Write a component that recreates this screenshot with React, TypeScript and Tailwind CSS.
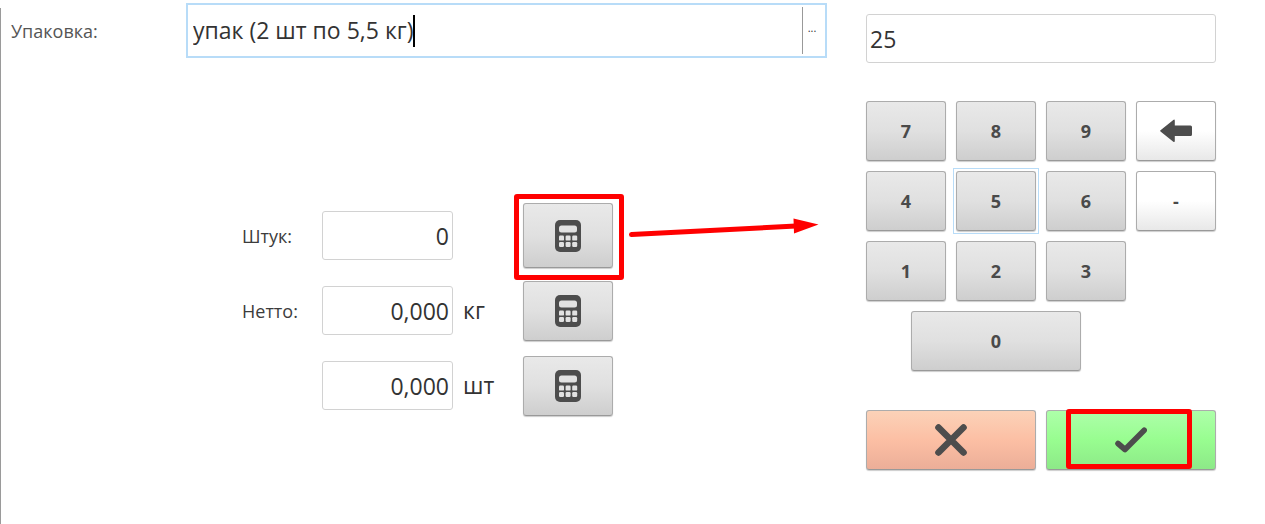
import { useState } from "react";
import type { ReactNode } from "react";

const keyBase =
  "flex items-center justify-center rounded-[3px] border border-[#acacac] border-b-[#999999] bg-linear-to-b text-lg font-bold text-[#4a4a4a] shadow-[0_1px_1px_rgba(0,0,0,0.2)]";
const grey = "from-[#e9e9e9] via-[#e0e0e0] to-[#cecece]";
const white = "from-white via-white to-[#e8e8e8]";

function CalculatorIcon() {
  return (
    <svg width="26" height="32" viewBox="0 0 26 32" aria-hidden="true">
      <rect width="26" height="32" rx="5" fill="#4d4d4d" />
      <g fill="#e2e2e2">
        <rect x="4" y="5.5" width="18" height="7" rx="2.5" />
        {[4, 10.6, 17.2].map((x) => (
          <g key={x}>
            <rect x={x} y="15.6" width="5" height="5" rx="1.2" />
            <rect x={x} y="22" width="5" height="5" rx="1.2" />
          </g>
        ))}
      </g>
    </svg>
  );
}

function ArrowPointer() {
  return (
    <svg
      className="pointer-events-none absolute top-[13px] left-[105px] max-w-none"
      width="192"
      height="24"
      viewBox="0 0 192 24"
      aria-hidden="true"
    >
      <path d="M3.500 18.500 L168 10" stroke="#ff0000" strokeWidth="5" strokeLinecap="round" />
      <path d="M165.500 2.500 L190.500 8.500 L166 17.500 Z" fill="#ff0000" />
    </svg>
  );
}

function QuantityRow({
  id,
  label,
  initial,
  unit,
  children,
}: {
  id: string;
  label: string;
  initial: string;
  unit: string;
  children: ReactNode;
}) {
  const [value, setValue] = useState(initial);
  return (
    <div className="flex h-[75px] items-center">
      <label htmlFor={id} className="w-20 shrink-0 text-lg text-[#3c3c3c]">
        {label}
      </label>
      <input
        id={id}
        aria-label={label || unit}
        value={value}
        onChange={(e) => setValue(e.target.value)}
        className="h-[49px] w-[131px] shrink-0 rounded-[3px] border border-[#d2d2d2] px-[3px] text-right text-[23px] text-[#333333] outline-none"
      />
      <span className="w-[70px] shrink-0 pl-[10px] text-[23px] text-[#333333]">{unit}</span>
      {children}
    </div>
  );
}

function Key({ children, className, label }: { children: ReactNode; className: string; label?: string }) {
  return (
    <button type="button" aria-label={label} className={`${keyBase} h-[60px] ${className}`}>
      {children}
    </button>
  );
}

export default function App() {
  const [pack, setPack] = useState("упак (2 шт по 5,5 кг)");
  const [amount, setAmount] = useState("25");

  return (
    <div className="flex min-h-screen bg-white pr-[49px] font-['Open_Sans','Noto_Sans',sans-serif]">
      <div className="mt-2 w-px shrink-0 bg-[#9a9a9a]" />
      <main className="min-w-0 flex-1 pt-[3px] pl-[10px]">
        <div className="flex items-center">
          <label htmlFor="pack" className="w-[175px] shrink-0 text-lg text-[#555555]">
            Упаковка:
          </label>
          <div className="flex h-[55px] min-w-0 flex-1 items-center border-2 border-[#b8dcf8] py-[2px] pl-[5px]">
            <input
              id="pack"
              value={pack}
              onChange={(e) => setPack(e.target.value)}
              className="min-w-0 text-[23px] text-[#333333] outline-none [field-sizing:content]"
            />
            <span className="h-8 w-[2px] shrink-0 bg-black" />
            <button
              type="button"
              aria-label="Выбрать упаковку"
              className="ml-auto flex h-full w-[23px] items-center justify-center border-l border-[#999999] pr-1 pb-1 text-[11px] text-[#333333]"
            >
              ...
            </button>
          </div>
        </div>

        <div className="mt-[140px] ml-[231px] flex flex-col">
          <QuantityRow id="pieces" label="Штук:" initial="0" unit="">
            <div className="relative shrink-0">
              <button type="button" aria-label="Ввести штуки" className={`${keyBase} ${grey} h-[65px] w-[90px]`}>
                <CalculatorIcon />
              </button>
              <div className="pointer-events-none absolute -top-[9px] -right-[11px] -bottom-3 -left-[9px] rounded-[3px] border-[5px] border-[#ff0000]" />
              <ArrowPointer />
            </div>
          </QuantityRow>
          <QuantityRow id="net" label="Нетто:" initial="0,000" unit="кг">
            <Key label="Ввести нетто" className={`${grey} w-[90px] shrink-0`}>
              <CalculatorIcon />
            </Key>
          </QuantityRow>
          <QuantityRow id="count" label="" initial="0,000" unit="шт">
            <Key label="Ввести количество" className={`${grey} w-[90px] shrink-0`}>
              <CalculatorIcon />
            </Key>
          </QuantityRow>
        </div>
      </main>

      <aside className="ml-[39px] w-[350px] shrink-0 pt-[14px]">
        <input
          aria-label="Количество"
          value={amount}
          onChange={(e) => setAmount(e.target.value)}
          className="block h-[49px] w-full rounded-[3px] border border-[#d2d2d2] px-[3px] text-[23px] text-[#333333] outline-none"
        />

        <div className="mt-[38px] grid grid-cols-4 gap-[10px]">
          <Key className={grey}>7</Key>
          <Key className={grey}>8</Key>
          <Key className={grey}>9</Key>
          <Key className={white} label="Стереть">
            <svg width="32" height="24" viewBox="0 0 32 24" aria-hidden="true">
              <path
                d="M0.500 11.200 L13.300 0.900 Q14.800 0 14.800 1.800 V6.500 H30.500 Q32 6.500 32 8 V15.500 Q32 17 30.500 17 H14.800 V21.800 Q14.800 23.600 13.300 22.700 L0.500 12.400 Q-0.200 11.800 0.500 11.200 Z"
                fill="#4d4d4d"
              />
            </svg>
          </Key>
          <Key className={grey}>4</Key>
          <div className="grid outline outline-offset-2 outline-[#b8dcf8]">
            <Key className={grey}>5</Key>
          </div>
          <Key className={grey}>6</Key>
          <Key className={white}>-</Key>
          <Key className={grey}>1</Key>
          <Key className={grey}>2</Key>
          <Key className={grey}>3</Key>
          <div className="col-span-3 col-start-1 flex justify-center">
            <Key className={`${grey} w-[170px]`}>0</Key>
          </div>
        </div>

        <div className="mt-[39px] grid grid-cols-2 gap-[10px]">
          <Key className="from-[#fbd2b8] via-[#fcbfa4] to-[#ecae98]" label="Отмена">
            <svg width="32" height="32" viewBox="0 0 32 32" aria-hidden="true">
              <path d="M3.500 3.500 L28.500 28.500 M28.500 3.500 L3.500 28.500" stroke="#4d4d4d" strokeWidth="6.600" strokeLinecap="round" />
            </svg>
          </Key>
          <div className="relative grid">
            <Key className="from-[#adffa9] via-[#98fd90] to-[#8de988]" label="Подтвердить">
              <svg width="32" height="26" viewBox="0 0 32 26" aria-hidden="true">
                <path
                  d="M3 16.500 L10 22.500 L29.200 3.300"
                  fill="none"
                  stroke="#4d4d4d"
                  strokeWidth="5.600"
                  strokeLinecap="round"
                  strokeLinejoin="round"
                />
              </svg>
            </Key>
            <div className="pointer-events-none absolute -top-px right-6 bottom-px left-5 rounded-[3px] border-[5px] border-[#ff0000]" />
          </div>
        </div>
      </aside>
    </div>
  );
}
